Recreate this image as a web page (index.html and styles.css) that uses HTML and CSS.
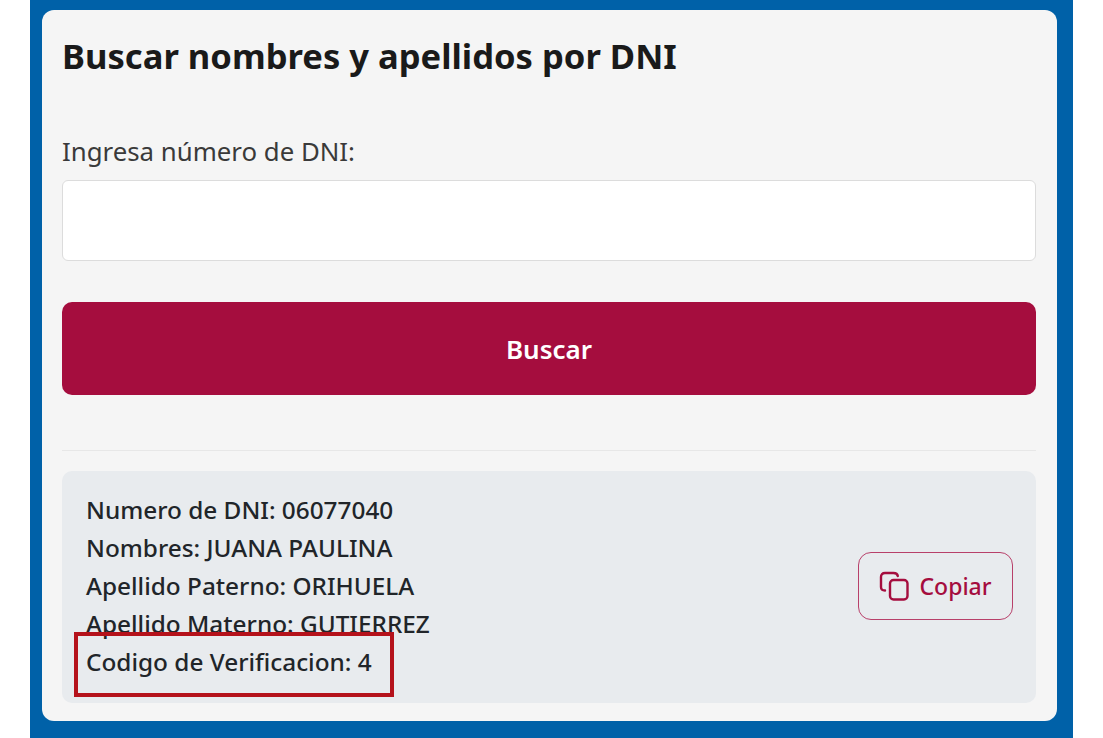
FILE: index.html
```html
<!DOCTYPE html>
<html lang="en">
<head>
    <meta charset="UTF-8">
    <title>Buscar nombres y apellidos por DNI</title>
    <link rel="stylesheet" href="styles.css">
</head>
<body>
    <div class="page">
        <div class="card">
            <h2>Buscar nombres y apellidos por DNI</h2>
            <label for="dni">Ingresa número de DNI:</label>
            <input id="dni" type="text">
            <button class="search">Buscar</button>
            <hr>
            <div class="result">
                <div class="lines">
                    <div>Numero de DNI: 06077040</div>
                    <div>Nombres: JUANA PAULINA</div>
                    <div>Apellido Paterno: ORIHUELA</div>
                    <div>Apellido Materno: GUTIERREZ</div>
                    <div class="code">Codigo de Verificacion: 4<span class="highlight"></span></div>
                </div>
                <button class="copy">
                    <svg width="30" height="30" viewBox="0 0 30 30" fill="none" stroke="currentColor" stroke-width="2.4" stroke-linecap="round" stroke-linejoin="round">
                        <rect x="11" y="9" width="17.5" height="19.5" rx="3.5"></rect>
                        <path d="M6 19.5 C3.2 19.5 2 18.4 2 16 V6 C2 3.4 3.4 2 6 2 H14.5 C17 2 18.5 3 18.8 5"></path>
                    </svg>
                    Copiar
                </button>
            </div>
        </div>
    </div>
</body>
</html>
```

FILE: styles.css
```css
html, body {
    margin: 0;
    height: 738px;
    overflow: hidden;
    background: white;
}
body {
    font-family: "Noto Sans", "Open Sans", sans-serif;
}
.page {
    margin: 0 30px;
    height: 738px;
    box-sizing: border-box;
    padding: 10px 16px 17px 12px;
    background: #0061a8;
}
.card {
    height: 711px;
    box-sizing: border-box;
    padding: 23px 21px 18px 20px;
    background: #f5f5f5;
    border-radius: 12px;
}
h2 {
    margin: 0;
    font-size: 34.6px;
    line-height: 46px;
    font-weight: 700;
    color: #1a1a1a;
}
label {
    display: block;
    margin-top: 54px;
    font-size: 25.8px;
    line-height: 36px;
    color: #3a3a3a;
}
input {
    display: block;
    width: 100%;
    height: 81px;
    margin-top: 11px;
    box-sizing: border-box;
    background: white;
    border: 1px solid #dcdcdc;
    border-radius: 6px;
}
.search {
    display: block;
    width: 100%;
    height: 93px;
    margin-top: 41px;
    border: none;
    border-radius: 10px;
    background: #a50d3e;
    color: white;
    font-family: inherit;
    font-size: 26px;
    font-weight: 600;
}
hr {
    margin: 55px 0 20px 0;
    border: none;
    border-top: 1px solid #e7e7e7;
}
.result {
    display: flex;
    align-items: center;
    justify-content: space-between;
    height: 232px;
    box-sizing: border-box;
    padding: 20px 23px 22px 24px;
    background: #e8ebee;
    border-radius: 10px;
}
.lines {
    font-size: 24.35px;
    line-height: 38px;
    font-weight: 500;
    color: #212529;
}
.code {
    position: relative;
}
.highlight {
    position: absolute;
    left: -12px;
    top: -11px;
    width: 312px;
    height: 57px;
    border: 4px solid #b5121b;
}
.copy {
    display: flex;
    align-items: center;
    gap: 10px;
    width: 155px;
    height: 68px;
    justify-content: center;
    padding: 0;
    background: transparent;
    border: 1px solid #b8406a;
    border-radius: 13px;
    color: #a50d3e;
    font-family: inherit;
    font-size: 23px;
    font-weight: 500;
}
```
